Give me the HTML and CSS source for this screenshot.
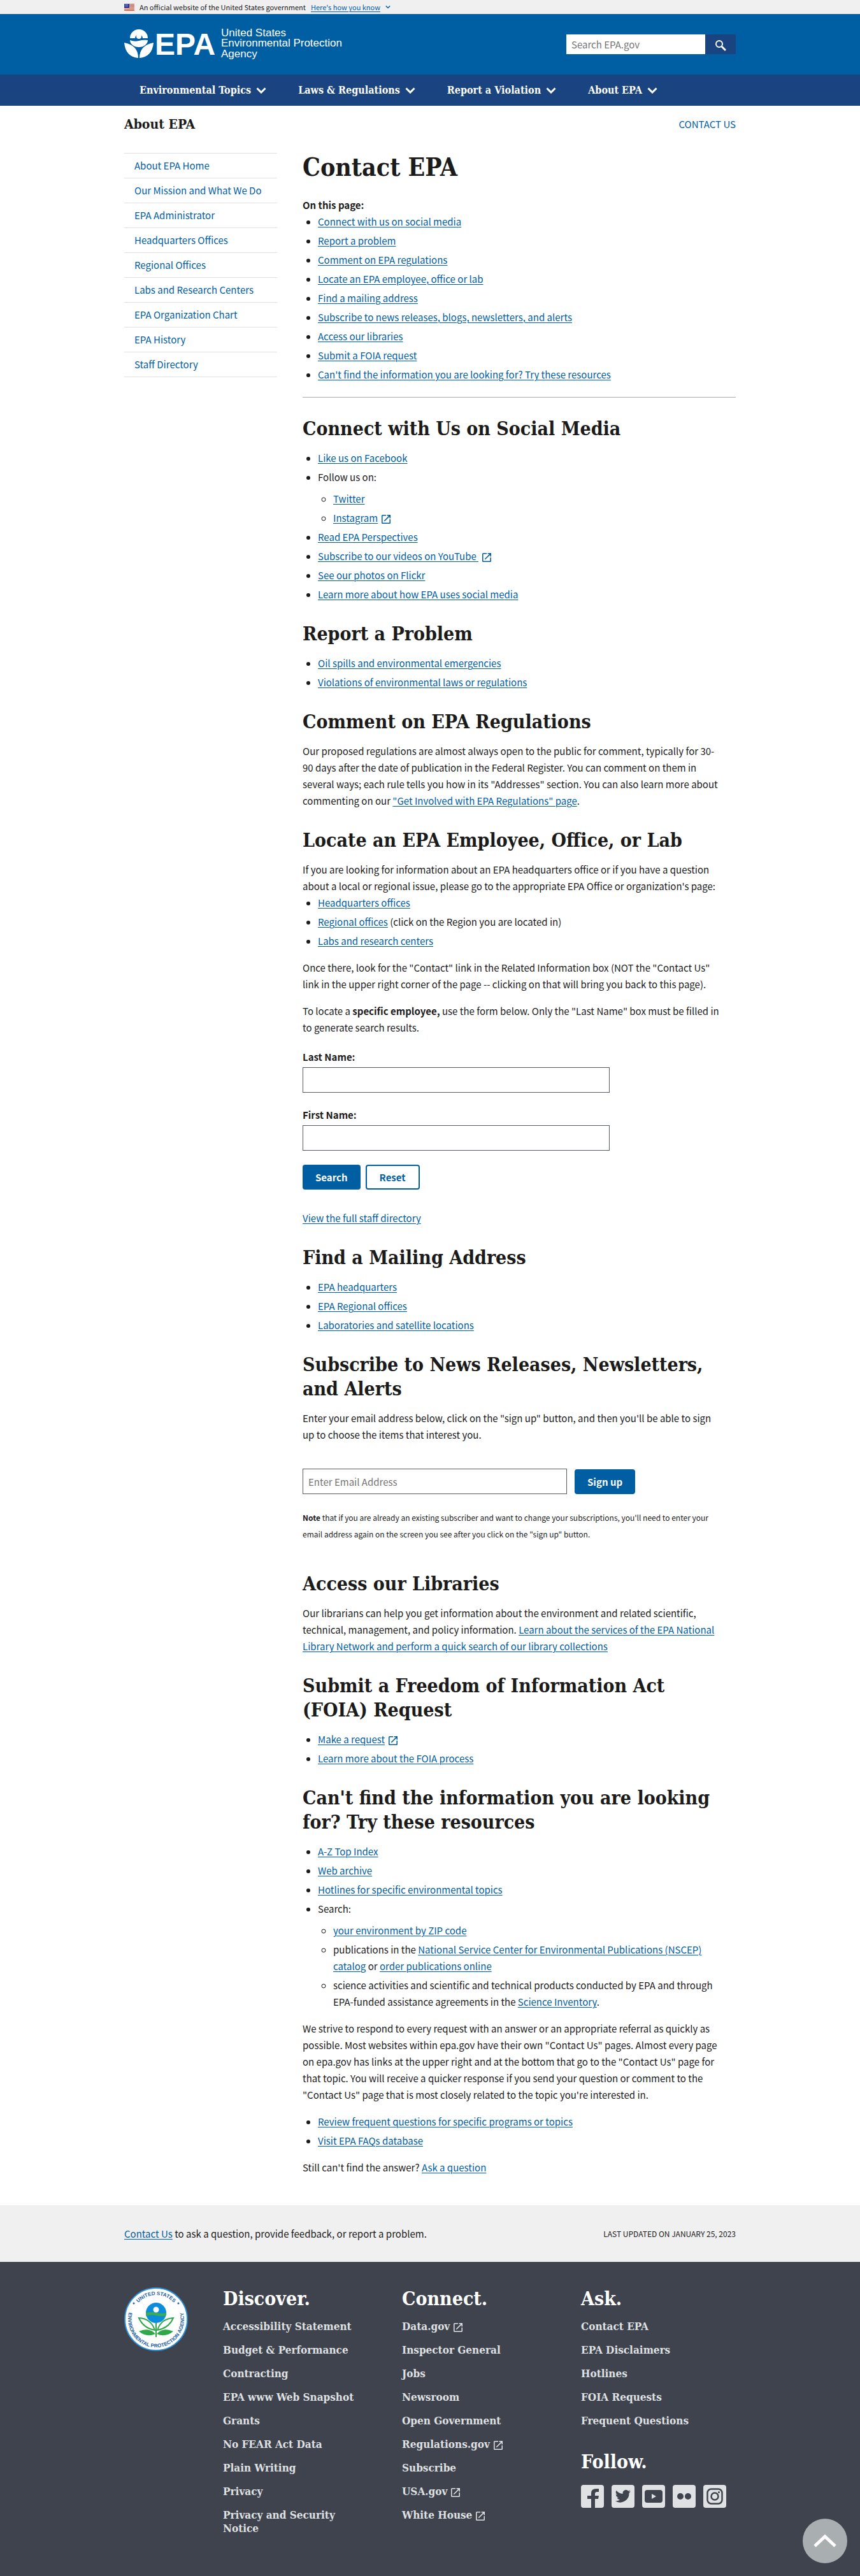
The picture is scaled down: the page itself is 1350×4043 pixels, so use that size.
FILE: index.html
```html
<!DOCTYPE html>
<html lang="en">
<head>
<meta charset="utf-8">
<meta name="viewport" content="width=device-width, initial-scale=1">
<title>Contact EPA | US EPA</title>
<link rel="stylesheet" href="styles.css">
</head>
<body>
<svg class="sprite" aria-hidden="true">
  <symbol id="launch" viewBox="0 0 18 18"><path fill="currentColor" d="M16 16H2V2h7V0H2a2 2 0 0 0-2 2v14a2 2 0 0 0 2 2h14a2 2 0 0 0 2-2V9h-2v7zM11 0v2h3.600l-9.800 9.800 1.400 1.400L16 3.400V7h2V0h-7z"/></symbol>
  <symbol id="chevron" viewBox="0 0 16 10"><path fill="none" stroke="currentColor" stroke-width="3" d="M1.500 1.500 8 8l6.500-6.500"/></symbol>
</svg>

<div class="banner">
  <div class="container banner-row">
    <svg class="flag" viewBox="0 0 16 11" aria-hidden="true"><path fill="#fff" d="M0 0h16v11H0z"/><path fill="#db3e1f" d="M0 0h16v1H0zM0 2h16v1H0zM0 4h16v1H0zM0 6h16v1H0zM0 8h16v1H0zM0 10h16v1H0z"/><path fill="#1e33b1" d="M0 0h8v6H0z"/><path stroke="#fff" stroke-dasharray="1 1" d="M1 1.500h6M1 3.500h6"/></svg>
    <span>An official website of the United States government</span>
    <a href="#know">Here's how you know</a>
    <svg class="banner-chevron" viewBox="0 0 16 10" aria-hidden="true"><use href="#chevron"/></svg>
  </div>
</div>

<header>
  <div class="masthead">
    <div class="container masthead-row">
      <a class="logo" href="#home" aria-label="US EPA">
        <svg viewBox="0 0 346 50" aria-hidden="true">
          <g fill="#fff">
            <path d="M9 15a14 14 0 0 1 28 0h-8a6 6 0 1 0-12 0z"/>
            <circle cx="23" cy="12" r="4"/>
            <path d="M9 18q7 3 14 1t14-1a14 11 0 0 1-28 0z"/>
            <path d="M0 22q22 4 22 24Q2 44 0 22zM46 22Q24 26 24 46 44 44 46 22z"/>
          </g>
          <text class="logo-epa" x="48" y="41">EPA</text>
          <g class="logo-name"><text x="152" y="12">United States</text><text x="152" y="28">Environmental Protection</text><text x="152" y="45">Agency</text></g>
        </svg>
      </a>
      <form class="site-search">
        <input type="search" aria-label="Search" placeholder="Search EPA.gov">
        <button type="submit" aria-label="Search"><svg viewBox="0 0 18 18" aria-hidden="true"><circle cx="7" cy="7" r="5" fill="none" stroke="#fff" stroke-width="2"/><path stroke="#fff" stroke-width="3" d="m11 11 6 6"/></svg></button>
      </form>
    </div>
  </div>
  <nav class="main-nav" aria-label="Main">
    <div class="container main-nav-row">
      <button type="button">Environmental Topics <svg viewBox="0 0 16 10"><use href="#chevron"/></svg></button>
      <button type="button">Laws &amp; Regulations <svg viewBox="0 0 16 10"><use href="#chevron"/></svg></button>
      <button type="button">Report a Violation <svg viewBox="0 0 16 10"><use href="#chevron"/></svg></button>
      <button type="button">About EPA <svg viewBox="0 0 16 10"><use href="#chevron"/></svg></button>
    </div>
  </nav>
</header>

<div class="container area-head">
  <p class="area-title">About EPA</p>
  <a href="#contact">CONTACT US</a>
</div>

<div class="container layout">
  <nav class="sidenav" aria-label="About EPA">
    <ul>
      <li><a href="#about">About EPA Home</a></li>
      <li><a href="#mission">Our Mission and What We Do</a></li>
      <li><a href="#admin">EPA Administrator</a></li>
      <li><a href="#hq">Headquarters Offices</a></li>
      <li><a href="#regional">Regional Offices</a></li>
      <li><a href="#labs">Labs and Research Centers</a></li>
      <li><a href="#org">EPA Organization Chart</a></li>
      <li><a href="#history">EPA History</a></li>
      <li><a href="#staff">Staff Directory</a></li>
    </ul>
  </nav>

  <main>
    <h1>Contact EPA</h1>
    <p><strong>On this page:</strong></p>
    <ul class="tight">
      <li><a href="#social">Connect with us on social media</a></li>
      <li><a href="#problem">Report a problem</a></li>
      <li><a href="#comment">Comment on EPA regulations</a></li>
      <li><a href="#locate">Locate an EPA employee, office or lab</a></li>
      <li><a href="#mailing">Find a mailing address</a></li>
      <li><a href="#news">Subscribe to news releases, blogs, newsletters, and alerts</a></li>
      <li><a href="#libraries">Access our libraries</a></li>
      <li><a href="#foia">Submit a FOIA request</a></li>
      <li><a href="#more">Can't find the information you are looking for? Try these resources</a></li>
    </ul>
    <hr>

    <h2 id="social">Connect with Us on Social Media</h2>
    <ul>
      <li><a href="#fb">Like us on Facebook</a></li>
      <li>Follow us on:
        <ul>
          <li><a href="#tw">Twitter</a></li>
          <li><a href="#ig">Instagram<svg class="ext"><use href="#launch"/></svg></a></li>
        </ul>
      </li>
      <li><a href="#perspectives">Read EPA Perspectives</a></li>
      <li><a href="#yt">Subscribe to our videos on YouTube&nbsp;<svg class="ext"><use href="#launch"/></svg></a></li>
      <li><a href="#flickr">See our photos on Flickr</a></li>
      <li><a href="#how">Learn more about how EPA uses social media</a></li>
    </ul>

    <h2 id="problem">Report a Problem</h2>
    <ul>
      <li><a href="#spills">Oil spills and environmental emergencies</a></li>
      <li><a href="#violations">Violations of environmental laws or regulations</a></li>
    </ul>

    <h2 id="comment">Comment on EPA Regulations</h2>
    <p>Our proposed regulations are almost always open to the public for comment, typically for 30-90 days after the date of publication in the Federal Register. You can comment on them in several ways; each rule tells you how in its "Addresses" section. You can also learn more about commenting on our <a href="#regs">"Get Involved with EPA Regulations" page</a>.</p>

    <h2 id="locate">Locate an EPA Employee, Office, or Lab</h2>
    <p>If you are looking for information about an EPA headquarters office or if you have a question about a local or regional issue, please go to the appropriate EPA Office or organization's page:</p>
    <ul class="tight">
      <li><a href="#hqo">Headquarters offices</a></li>
      <li><a href="#ro">Regional offices</a> (click on the Region you are located in)</li>
      <li><a href="#lrc">Labs and research centers</a></li>
    </ul>
    <p>Once there, look for the "Contact" link in the Related Information box (NOT the "Contact Us" link in the upper right corner of the page -- clicking on that will bring you back to this page).</p>
    <p>To locate a <strong>specific employee,</strong> use the form below. Only the "Last Name" box must be filled in to generate search results.</p>
    <form class="people-form">
      <label for="last">Last Name:</label>
      <input id="last" type="text">
      <label for="first">First Name:</label>
      <input id="first" type="text">
      <div class="actions">
        <button class="btn" type="submit">Search</button>
        <button class="btn btn-outline" type="reset">Reset</button>
      </div>
    </form>
    <p class="directory"><a href="#dir">View the full staff directory</a></p>

    <h2 id="mailing">Find a Mailing Address</h2>
    <ul>
      <li><a href="#m1">EPA headquarters</a></li>
      <li><a href="#m2">EPA Regional offices</a></li>
      <li><a href="#m3">Laboratories and satellite locations</a></li>
    </ul>

    <h2 id="news">Subscribe to News Releases, Newsletters, and Alerts</h2>
    <p>Enter your email address below, click on the "sign up" button, and then you'll be able to sign up to choose the items that interest you.</p>
    <form class="signup">
      <input type="email" aria-label="Email address" placeholder="Enter Email Address">
      <button class="btn" type="submit">Sign up</button>
    </form>
    <p class="note"><strong>Note</strong> that if you are already an existing subscriber and want to change your subscriptions, you'll need to enter your email address again on the screen you see after you click on the "sign up" button.</p>

    <h2 id="libraries">Access our Libraries</h2>
    <p>Our librarians can help you get information about the environment and related scientific, technical, management, and policy information. <a href="#lib">Learn about the services of the EPA National Library Network and perform a quick search of our library collections</a></p>

    <h2 id="foia">Submit a Freedom of Information Act (FOIA) Request</h2>
    <ul>
      <li><a href="#f1">Make a request<svg class="ext"><use href="#launch"/></svg></a></li>
      <li><a href="#f2">Learn more about the FOIA process</a></li>
    </ul>

    <h2 id="more">Can't find the information you are looking for? Try these resources</h2>
    <ul>
      <li><a href="#az">A-Z Top Index</a></li>
      <li><a href="#archive">Web archive</a></li>
      <li><a href="#hotlines">Hotlines for specific environmental topics</a></li>
      <li>Search:
        <ul>
          <li><a href="#zip">your environment by ZIP code</a></li>
          <li>publications in the <a href="#nscep">National Service Center for Environmental Publications (NSCEP) catalog</a> or <a href="#order">order publications online</a></li>
          <li>science activities and scientific and technical products conducted by EPA and through EPA-funded assistance agreements in the <a href="#sci">Science Inventory</a>.</li>
        </ul>
      </li>
    </ul>
    <p>We strive to respond to every request with an answer or an appropriate referral as quickly as possible. Most websites within epa.gov have their own "Contact Us" pages. Almost every page on epa.gov has links at the upper right and at the bottom that go to the "Contact Us" page for that topic. You will receive a quicker response if you send your question or comment to the "Contact Us" page that is most closely related to the topic you're interested in.</p>
    <ul>
      <li><a href="#faq">Review frequent questions for specific programs or topics</a></li>
      <li><a href="#faqdb">Visit EPA FAQs database</a></li>
    </ul>
    <p>Still can't find the answer? <a href="#ask">Ask a question</a></p>
  </main>
</div>

<footer>
  <div class="feedback">
    <div class="container feedback-row">
      <p><a href="#contact">Contact Us</a> to ask a question, provide feedback, or report a problem.</p>
      <p class="updated">LAST UPDATED ON JANUARY 25, 2023</p>
    </div>
  </div>
  <div class="site-footer">
    <div class="container footer-grid">
      <svg class="seal" viewBox="0 0 100 100" role="img" aria-label="United States Environmental Protection Agency">
        <defs>
          <path id="ring-top" d="M12 50a38 38 0 0 1 76 0"/>
          <path id="ring-bottom" d="M19 19A44 44 0 1 0 81 19"/>
        </defs>
        <circle cx="50" cy="50" r="49" fill="#fff" stroke="#2b8fd6" stroke-width="2"/>
        <g class="seal-text">
          <text><textPath href="#ring-top" startOffset="50%" text-anchor="middle">UNITED STATES</textPath></text>
          <text><textPath href="#ring-bottom" startOffset="50%" text-anchor="middle">ENVIRONMENTAL PROTECTION AGENCY</textPath></text>
        </g>
        <circle cx="15" cy="25" r="1.500" fill="#1d5fa8"/><circle cx="85" cy="25" r="1.500" fill="#1d5fa8"/>
        <circle cx="50" cy="40" r="16" fill="#0b8ddb"/>
        <path fill="#3fae49" d="M34 40q8-2 16 0t16 0v4q-8 2-16 0t-16 1z"/>
        <circle cx="50" cy="35" r="4.500" fill="#fff"/>
        <g fill="#fff" stroke="#2fa84a" stroke-width="2"><path d="M48 67Q30 64 23 48q19 1 25 19zM52 67q18-3 25-19-19 1-25 19z"/></g>
        <path fill="#2fa84a" d="M49 56h2v22h-2zM49 73q-14 6-26-4 16-7 26 4zM51 73q14 6 26-4-16-7-26 4z"/>
      </svg>
      <div>
        <h2>Discover.</h2>
        <ul>
          <li><a href="#d1">Accessibility Statement</a></li>
          <li><a href="#d2">Budget &amp; Performance</a></li>
          <li><a href="#d3">Contracting</a></li>
          <li><a href="#d4">EPA www Web Snapshot</a></li>
          <li><a href="#d5">Grants</a></li>
          <li><a href="#d6">No FEAR Act Data</a></li>
          <li><a href="#d7">Plain Writing</a></li>
          <li><a href="#d8">Privacy</a></li>
          <li><a href="#d9">Privacy and Security Notice</a></li>
        </ul>
      </div>
      <div>
        <h2>Connect.</h2>
        <ul>
          <li><a href="#c1">Data.gov<svg class="ext"><use href="#launch"/></svg></a></li>
          <li><a href="#c2">Inspector General</a></li>
          <li><a href="#c3">Jobs</a></li>
          <li><a href="#c4">Newsroom</a></li>
          <li><a href="#c5">Open Government</a></li>
          <li><a href="#c6">Regulations.gov<svg class="ext"><use href="#launch"/></svg></a></li>
          <li><a href="#c7">Subscribe</a></li>
          <li><a href="#c8">USA.gov<svg class="ext"><use href="#launch"/></svg></a></li>
          <li><a href="#c9">White House<svg class="ext"><use href="#launch"/></svg></a></li>
        </ul>
      </div>
      <div>
        <h2>Ask.</h2>
        <ul>
          <li><a href="#a1">Contact EPA</a></li>
          <li><a href="#a2">EPA Disclaimers</a></li>
          <li><a href="#a3">Hotlines</a></li>
          <li><a href="#a4">FOIA Requests</a></li>
          <li><a href="#a5">Frequent Questions</a></li>
        </ul>
        <h2 class="follow">Follow.</h2>
        <div class="social">
          <a href="#s1" aria-label="Facebook"><svg viewBox="0 0 36 36"><path fill="#3f434e" d="M16 36V22h-6v-5h6v-4q0-7 8-7h4v5h-3q-3 0-3 3v3h6l-1 5h-5v14z"/></svg></a>
          <a href="#s2" aria-label="Twitter"><svg viewBox="0 0 36 36"><path fill="#3f434e" d="M30 10.300a10 10 0 0 1-2.900.8 5 5 0 0 0 2.200-2.800 10 10 0 0 1-3.100 1.200 5 5 0 0 0-8.500 4.500A14 14 0 0 1 7.500 8.800a5 5 0 0 0 1.500 6.600 5 5 0 0 1-2.200-.6 5 5 0 0 0 4 4.900 5 5 0 0 1-2.200.1 5 5 0 0 0 4.600 3.400A10 10 0 0 1 6 25.300a14 14 0 0 0 21.500-12.500 10 10 0 0 0 2.500-2.500z"/></svg></a>
          <a href="#s3" aria-label="YouTube"><svg viewBox="0 0 36 36"><rect x="4" y="8" width="28" height="20" rx="4" fill="#3f434e"/><path fill="#dfe1e2" d="m15 14 7 4-7 4z"/></svg></a>
          <a href="#s4" aria-label="Flickr"><svg viewBox="0 0 36 36"><circle cx="12" cy="18" r="5" fill="#3f434e"/><circle cx="24" cy="18" r="5" fill="#3f434e"/></svg></a>
          <a href="#s5" aria-label="Instagram"><svg viewBox="0 0 36 36" fill="none" stroke="#3f434e" stroke-width="2.500"><rect x="6.500" y="6.500" width="23" height="23" rx="6"/><circle cx="18" cy="18" r="5.500"/><circle cx="24.500" cy="11.500" r="1.500" fill="#3f434e" stroke="none"/></svg></a>
        </div>
      </div>
    </div>
  </div>
</footer>
<a class="to-top" href="#top" aria-label="Back to top"><svg viewBox="0 0 36 24" aria-hidden="true"><path fill="none" stroke="#fff" stroke-width="5" d="M2 20 18 5l16 15"/></svg></a>
</body>
</html>
```
FILE: styles.css
```css
* { box-sizing: border-box; }

body {
  margin: 0;
  background: #fff;
  color: #1b1b1b;
  font: 15px/26px "Noto Sans CJK SC", "Open Sans", sans-serif;
}

a { color: #005ea2; text-underline-offset: 2px; text-decoration-thickness: 1px; }
p, h1, h2, ul { margin: 0; padding: 0; }
button, input { font: inherit; margin: 0; }

h1, h2, .area-title, .main-nav button, .footer-grid {
  font-family: "DejaVu Serif Condensed", "DejaVu Serif", serif;
  font-weight: 700;
}

.sprite { display: none; }
.container { max-width: 1024px; margin: 0 auto; padding: 0 32px; }

/* Government banner */
.banner { background: #f0f0f0; font-size: 11px; line-height: 22px; }
.banner-row { display: flex; align-items: center; gap: 8px; }
.flag { width: 16px; height: 11px; }
.banner-chevron { width: 8px; height: 6px; color: #005ea2; }

/* Masthead */
.masthead { background: #005ea2; }
.masthead-row { display: flex; align-items: center; justify-content: space-between; height: 95px; }
.logo svg { display: block; width: 346px; height: 50px; overflow: visible; }
.logo-epa { font: 700 48px "Liberation Sans", sans-serif; fill: #fff; }
.logo-name { font: 17px "Liberation Sans", sans-serif; fill: #fff; }
.site-search { display: flex; }
.site-search input { width: 218px; height: 31px; padding: 0 8px; border: 0; border-radius: 0; background: #fff; }
.site-search button { width: 48px; height: 31px; border: 0; padding: 0; background: #1a4480; }
.site-search svg { width: 18px; height: 18px; vertical-align: middle; }
::placeholder { color: #757575; opacity: 1; }

/* Main navigation */
.main-nav { background: #1a4480; }
.main-nav-row { display: flex; gap: 50px; padding: 0 56px; }
.main-nav button { display: flex; align-items: center; gap: 8px; border: 0; padding: 0; background: none; color: #fff; font-size: 16px; line-height: 49px; white-space: nowrap; }
.main-nav svg { width: 16px; height: 10px; }

/* Section heading */
.area-head { display: flex; justify-content: space-between; align-items: center; padding-top: 16px; }
.area-title { font-size: 21px; }
.area-head a { text-decoration: none; }

/* Page body */
.layout { display: grid; grid-template-columns: 240px minmax(0, 1fr); gap: 40px; align-items: start; padding-top: 32px; padding-bottom: 46px; }
.sidenav ul { list-style: none; border-bottom: 1px solid #dfe1e2; }
.sidenav li { border-top: 1px solid #dfe1e2; padding: 6px 16px; }
.sidenav a { text-decoration: none; }

main h1 { font-size: 39px; line-height: 45px; margin-bottom: 24px; }
main h2 { font-size: 30px; line-height: 38px; margin: 30px 0 14px; }
main p, main ul, main h2 { max-width: 656px; }
main ul { padding-left: 24px; }
main li + li { margin-top: 4px; }
main li ul { margin: 8px 0 4px; }
main p + p, main p + ul, main ul + p { margin-top: 16px; }
main p + .tight { margin-top: 0; }
hr { border: 0; border-top: 1px solid #a9aeb1; margin: 22px 0 30px; }
.ext { width: 14px; height: 14px; margin-left: 6px; vertical-align: -3px; }

/* Forms */
.people-form { display: flex; flex-direction: column; max-width: 482px; margin-top: 20px; }
.people-form label { font-weight: 700; }
.people-form input { height: 40px; margin: 3px 0 22px; }
.people-form input, .signup input { border: 1px solid #565c65; border-radius: 0; padding: 0 8px; background: #fff; }
.actions { display: flex; gap: 8px; }
.btn { height: 39px; border: 0; border-radius: 4px; padding: 0 20px; background: #005ea2; color: #fff; font-weight: 700; }
.btn-outline { border: 2px solid #005ea2; background: #fff; color: #005ea2; }
main .directory { margin-top: 32px; }
.signup { display: flex; align-items: flex-end; gap: 12px; margin: 40px 0 24px; }
.signup input { width: 415px; height: 40px; }
.note { font-size: 12px; margin-bottom: 46px; }

/* Feedback strip */
.feedback { background: #f0f0f0; }
.feedback-row { display: flex; justify-content: space-between; align-items: center; min-height: 89px; }
.updated { font-size: 12px; }

/* Site footer */
.site-footer { background: #3f434e; padding: 40px 0 48px; }
.footer-grid { display: grid; grid-template-columns: 100px 226px 226px 1fr; column-gap: 55px; align-items: start; font-size: 17px; line-height: 21px; }
.seal { width: 100px; height: 100px; }
.seal-text { font: 700 8px "Liberation Sans", sans-serif; fill: #1d5fa8; }
.footer-grid h2 { color: #fff; font-size: 30px; line-height: 36px; margin-bottom: 15px; }
.footer-grid ul { list-style: none; }
.footer-grid li { margin-bottom: 16px; }
.footer-grid a { color: #dfe1e2; text-decoration: none; }
.footer-grid .follow { margin: 36px 0 18px; }
.social { display: flex; gap: 12px; }
.social a { width: 36px; height: 36px; border-radius: 4px; background: #dfe1e2; }
.social svg { display: block; width: 36px; height: 36px; }

/* Floating link */
.to-top { position: fixed; right: 20px; bottom: 20px; width: 70px; height: 70px; border-radius: 50%; background: #a9aeb1; display: flex; align-items: center; justify-content: center; }
.to-top svg { width: 36px; height: 24px; }
```
